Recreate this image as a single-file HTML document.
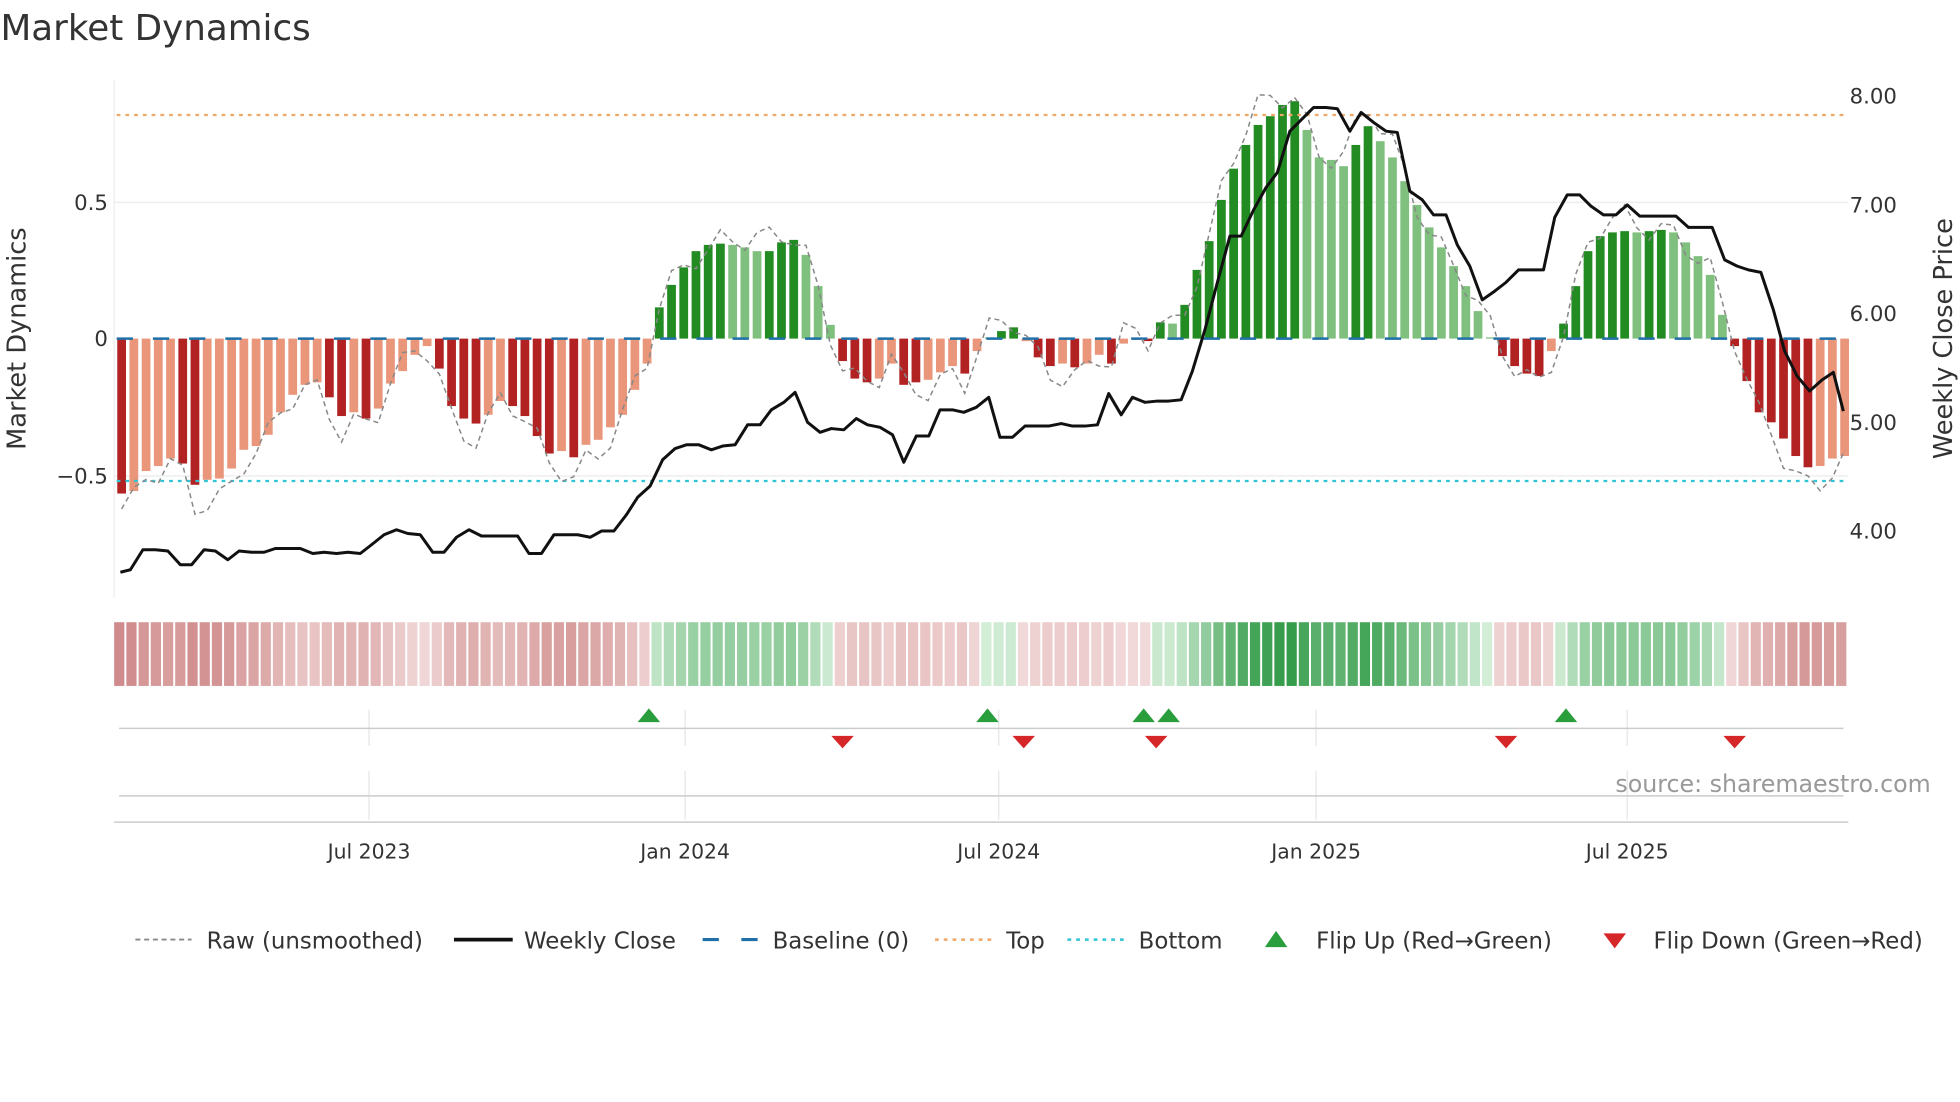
<!DOCTYPE html>
<html><head><meta charset="utf-8"><style>
html,body{margin:0;padding:0;background:#fff;width:1960px;height:1102px;overflow:hidden}
svg{display:block}
text{font-family:"DejaVu Sans","Liberation Sans",sans-serif;fill:#333}
</style></head><body>
<svg id="s" width="1960" height="1102" viewBox="0 0 1568 882" xmlns="http://www.w3.org/2000/svg">
<text x="0" y="32" font-size="28.6">Market Dynamics</text>
<line x1="91" y1="64" x2="91" y2="478" stroke="#eee" stroke-width="1"/>
<line x1="91" y1="162" x2="1479" y2="162" stroke="#eee" stroke-width="1.2"/>
<line x1="91" y1="381" x2="1479" y2="381" stroke="#eee" stroke-width="1.2"/>
<g font-size="17" text-anchor="end">
<text x="86" y="168">0.5</text><text x="86" y="277">0</text><text x="86" y="387">−0.5</text>
</g>
<g font-size="17">
<text x="1480" y="83">8.00</text><text x="1480" y="170">7.00</text><text x="1480" y="257">6.00</text><text x="1480" y="344">5.00</text><text x="1480" y="431">4.00</text>
</g>
<text font-size="20.5" transform="translate(20,271) rotate(-90)" text-anchor="middle">Market Dynamics</text>
<text font-size="20.5" transform="translate(1562,271) rotate(-90)" text-anchor="middle">Weekly Close Price</text>
<g id="bars"></g>
<g id="strip"></g>
<line x1="93" y1="92" x2="1475" y2="92" stroke="#f0a868" stroke-width="1.8" stroke-dasharray="3,4"/>
<line x1="93" y1="385" x2="1475" y2="385" stroke="#2ec4d6" stroke-width="1.8" stroke-dasharray="3,4"/>
<line x1="93" y1="271" x2="1475" y2="271" stroke="#1f6fa8" stroke-width="2" stroke-dasharray="13,16"/>
<polyline id="raw" fill="none" stroke="#888" stroke-width="1.2" stroke-dasharray="4,3"/>
<polyline id="close" fill="none" stroke="#111" stroke-width="2.4" stroke-linejoin="round"/>
<g stroke="#e6e6e6" stroke-width="1">
<line x1="295" y1="568" x2="295" y2="597"/><line x1="548" y1="568" x2="548" y2="597"/><line x1="799" y1="568" x2="799" y2="597"/><line x1="1053" y1="568" x2="1053" y2="597"/><line x1="1302" y1="568" x2="1302" y2="597"/>
<line x1="295" y1="617" x2="295" y2="656"/><line x1="548" y1="617" x2="548" y2="656"/><line x1="799" y1="617" x2="799" y2="656"/><line x1="1053" y1="617" x2="1053" y2="656"/><line x1="1302" y1="617" x2="1302" y2="656"/>
</g>
<line x1="95" y1="583" x2="1475" y2="583" stroke="#ccc" stroke-width="1.2"/>
<line x1="95" y1="637" x2="1475" y2="637" stroke="#ccc" stroke-width="1.2"/>
<line x1="91" y1="658" x2="1479" y2="658" stroke="#ccc" stroke-width="1.2"/>
<g fill="#2a9d3c">
<path d="M510 578 L519 567 L528 578Z"/><path d="M781 578 L790 567 L799 578Z"/><path d="M906 578 L915 567 L924 578Z"/><path d="M926 578 L935 567 L944 578Z"/><path d="M1244 578 L1253 567 L1262 578Z"/>
</g>
<g fill="#d62728">
<path d="M665 589 L674 599 L683 589Z"/><path d="M810 589 L819 599 L828 589Z"/><path d="M916 589 L925 599 L934 589Z"/><path d="M1196 589 L1205 599 L1214 589Z"/><path d="M1379 589 L1388 599 L1397 589Z"/>
</g>
<text x="1545" y="634" font-size="19" text-anchor="end" style="fill:#999">source: sharemaestro.com</text>
<g font-size="16.3" text-anchor="middle">
<text x="295" y="687">Jul 2023</text><text x="548" y="687">Jan 2024</text><text x="799" y="687">Jul 2024</text><text x="1053" y="687">Jan 2025</text><text x="1302" y="687">Jul 2025</text>
</g>
<g font-size="18.3">
<line x1="108" y1="752" x2="153" y2="752" stroke="#888" stroke-width="1.5" stroke-dasharray="4,3"/>
<text x="165" y="759">Raw (unsmoothed)</text>
<line x1="363" y1="752" x2="410" y2="752" stroke="#111" stroke-width="3"/>
<text x="419" y="759">Weekly Close</text>
<line x1="562" y1="752" x2="607" y2="752" stroke="#1f6fa8" stroke-width="2.5" stroke-dasharray="13,18"/>
<text x="618" y="759">Baseline (0)</text>
<line x1="748" y1="752" x2="793" y2="752" stroke="#f0a868" stroke-width="2" stroke-dasharray="3,4"/>
<text x="805" y="759">Top</text>
<line x1="854" y1="752" x2="899" y2="752" stroke="#2ec4d6" stroke-width="2" stroke-dasharray="3,4"/>
<text x="911" y="759">Bottom</text>
<path d="M1012 758 L1021 745 L1030 758Z" fill="#2a9d3c"/>
<text x="1053" y="759">Flip Up (Red→Green)</text>
<path d="M1283 747 L1292 759 L1301 747Z" fill="#d62728"/>
<text x="1323" y="759">Flip Down (Green→Red)</text>
</g>
</svg>
<script>
var D="D",L="L",G="G",g="g";
var v=[[D,-124],[L,-122],[L,-106],[L,-102],[L,-96],[D,-100],[D,-117],[L,-113],[L,-112],[L,-104],[L,-89],[L,-86],[L,-77],[L,-59],[L,-45],[L,-37],[L,-35],[D,-47],[D,-62],[L,-59],[D,-64],[L,-56],[L,-36],[L,-26],[L,-13],[L,-6],[D,-24],[D,-54],[D,-64],[D,-68],[L,-61],[L,-50],[D,-54],[D,-62],[D,-78],[D,-92],[L,-90],[D,-95],[L,-85],[L,-81],[L,-71],[L,-61],[L,-41],[L,-20],
[G,25],[G,43],[G,57],[G,70],[G,75],[G,76],[g,75],[g,73],[g,70],[G,70],[G,77],[G,79],[g,67],[g,42],[g,11],
[D,-18],[D,-32],[D,-35],[L,-32],[L,-20],[D,-37],[D,-35],[L,-33],[L,-27],[L,-22],[D,-28],[L,-10],[g,1],[G,6],[G,9],[L,-2],[D,-15],[D,-22],[L,-20],[D,-23],[L,-20],[L,-13],[D,-20],[L,-4],[L,-1],[D,-2],
[G,13],[g,12],[G,27],[G,55],[G,78],[G,111],[G,136],[G,155],[G,171],[G,178],[G,187],[G,190],[g,167],[g,145],[g,143],[g,138],[G,155],[G,170],[g,158],[g,145],[g,126],[g,107],[g,89],[g,73],[g,58],[g,42],[g,22],[g,1],
[D,-14],[D,-22],[D,-28],[D,-30],[L,-10],[G,12],[G,42],[G,70],[G,82],[G,85],[G,86],[g,85],[G,86],[G,87],[g,85],[g,77],[g,66],[g,51],[g,19],
[D,-6],[D,-34],[D,-59],[D,-67],[D,-80],[D,-94],[D,-103],[L,-102],[L,-96],[L,-94]];
var n=v.length,step=(1475-96)/(n-1),col={D:"#b22222",L:"#e9967a",G:"#228b22",g:"#7fc07f"};
var b="",s="",r=[],cw=(1479-91)/n;
function mix(a,c,t){var o="#";for(var k=0;k<3;k++){var x=Math.round(a[k]+(c[k]-a[k])*t);o+=(x<16?"0":"")+x.toString(16);}return o;}
for(var i=0;i<n;i++){var x=96+i*step+1,h=v[i][1];
 if(h>=0)b+='<rect x="'+(x-3.5)+'" y="'+(271-h)+'" width="7" height="'+h+'" fill="'+col[v[i][0]]+'"/>';
 else b+='<rect x="'+(x-3.5)+'" y="271" width="7" height="'+(-h)+'" fill="'+col[v[i][0]]+'"/>';
 var c;if(h>=0)c=mix([212,238,216],[52,156,74],Math.min(1,h/190));else c=mix([242,218,218],[208,140,140],Math.min(1,-h/124));
 s+='<rect x="'+(91+i*cw)+'" y="498" width="'+(cw-1.6)+'" height="51" fill="'+c+'"/>';
 var nz=Math.sin(i*1.7)*11+Math.sin(i*0.63)*7;r.push(x+","+(271-h*(h>0?1.05:1.1)-nz));}
document.getElementById("bars").innerHTML=b;document.getElementById("strip").innerHTML=s;
document.getElementById("raw").setAttribute("points",r.join(" "));
document.getElementById("close").setAttribute("points","96,458 104,456 114,440 124,440 134,441 144,452 153,452 163,440 172,441 182,448 191,441 201,442 211,442 220,439 230,439 240,439 250,443 259,442 269,443 278,442 288,443 297,436 307,428 317,424 326,427 336,428 346,442 355,442 365,430 375,424 385,429 394,429 404,429 414,429 423,443 433,443 443,428 453,428 462,428 472,430 481,425 491,425 501,412 510,398 520,389 530,368 540,359 549,356 559,356 569,360 578,357 588,356 598,340 608,340 617,328 627,322 636,314 646,338 656,346 665,343 675,344 685,335 694,340 704,342 714,348 723,370 733,349 743,349 752,328 762,328 771,330 781,326 791,318 800,350 810,350 820,341 829,341 839,341 849,339 858,341 868,341 878,340 887,315 897,332 906,318 916,322 926,321 935,321 945,320 954,297 964,264 974,226 984,189 993,189 1003,168 1013,150 1022,138 1032,105 1042,95 1051,86 1061,86 1070,87 1080,105 1089,90 1099,98 1109,105 1118,106 1128,153 1138,160 1147,172 1157,172 1166,196 1176,213 1186,240 1196,233 1205,226 1215,216 1225,216 1235,216 1244,174 1254,156 1264,156 1273,165 1283,172 1293,172 1302,164 1312,173 1322,173 1331,173 1341,173 1351,182 1360,182 1370,182 1380,208 1390,213 1399,216 1409,218 1419,248 1428,281 1438,301 1448,313 1458,304 1467,298 1475,329");
</script>
</body></html>
